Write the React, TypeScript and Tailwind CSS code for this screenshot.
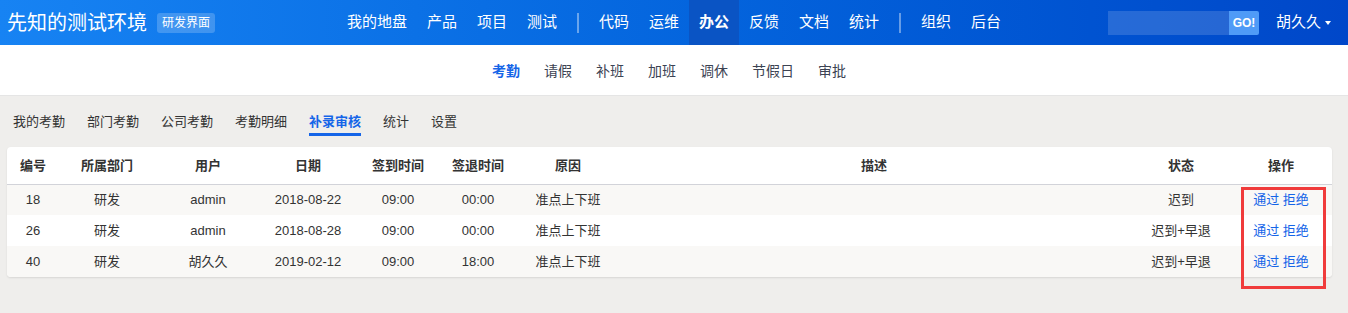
import React from 'react';

const font = "font-['Liberation_Sans','Noto_Sans_CJK_SC',sans-serif]";

const navGroups = [
  ['我的地盘', '产品', '项目', '测试'],
  ['代码', '运维', '办公', '反馈', '文档', '统计'],
  ['组织', '后台'],
];

const subNav = ['考勤', '请假', '补班', '加班', '调休', '节假日', '审批'];
const tabs = ['我的考勤', '部门考勤', '公司考勤', '考勤明细', '补录审核', '统计', '设置'];

const cols = [
  { label: '编号', w: 'w-[52px]' },
  { label: '所属部门', w: 'w-[96px]' },
  { label: '用户', w: 'w-[106px]' },
  { label: '日期', w: 'w-[94px]' },
  { label: '签到时间', w: 'w-[86px]' },
  { label: '签退时间', w: 'w-[74px]' },
  { label: '原因', w: 'w-[106px]' },
  { label: '描述', w: 'w-[506px]' },
  { label: '状态', w: 'w-[108px]' },
  { label: '操作', w: 'w-[97px]' },
];

const rows = [
  { id: '18', dept: '研发', user: 'admin', date: '2018-08-22', signIn: '09:00', signOut: '00:00', reason: '准点上下班', desc: '', status: '迟到' },
  { id: '26', dept: '研发', user: 'admin', date: '2018-08-28', signIn: '09:00', signOut: '00:00', reason: '准点上下班', desc: '', status: '迟到+早退' },
  { id: '40', dept: '研发', user: '胡久久', date: '2019-02-12', signIn: '09:00', signOut: '18:00', reason: '准点上下班', desc: '', status: '迟到+早退' },
];

function Header() {
  return (
    <div className="h-[45px] grid grid-cols-[1fr_auto_1fr] bg-gradient-to-r from-[#1783f3] to-[#0047c9] text-white">
      <div className="flex items-center pl-[7px]">
        <span className="text-[20px] leading-none">先知的测试环境</span>
        <span className="ml-[10px] h-[20px] px-[5px] flex items-center rounded-[3px] bg-white/20 text-[12px]">研发界面</span>
      </div>
      <nav className="flex items-stretch text-[15px]">
        {navGroups.map((g, gi) => (
          <React.Fragment key={gi}>
            {gi > 0 && <div className="self-center w-[2px] h-[20px] mx-[10px] bg-white/40" />}
            {g.map((item) => (
              <a
                key={item}
                className={
                  item === '办公'
                    ? 'px-[10px] flex items-center bg-[#0a54c4] font-bold'
                    : 'px-[10px] flex items-center'
                }
              >
                {item}
              </a>
            ))}
          </React.Fragment>
        ))}
      </nav>
      <div className="flex items-center justify-end">
        <div className="flex h-[24px]">
          <div className="w-[121px] bg-white/15" />
          <button className="w-[30px] bg-[#4f9bf7] rounded-r-[2px] text-[12px] font-semibold">GO!</button>
        </div>
        <div className="flex items-center pl-[17px] pr-[17px] text-[15px]">
          胡久久
          <span className="ml-[4px] w-0 h-0 border-l-[3px] border-r-[3px] border-t-[4px] border-l-transparent border-r-transparent border-t-white" />
        </div>
      </div>
    </div>
  );
}

function SubNav() {
  return (
    <div className="h-[51px] bg-white border-b border-[#e5e5e5] flex justify-center items-center pt-[3px] pr-[10px] text-[14px] text-[#3c4353]">
      {subNav.map((s) => (
        <a key={s} className={s === '考勤' ? 'px-[12px] text-[#1565e8] font-bold' : 'px-[12px]'}>
          {s}
        </a>
      ))}
    </div>
  );
}

function Tabs() {
  return (
    <div className="flex pl-[2px] pt-[15px] mb-[11px] text-[13px] text-[#333]">
      {tabs.map((t) => (
        <a key={t} className="px-[11px] flex flex-col">
          <span className={t === '补录审核' ? 'leading-[22px] text-[#1565e8] font-bold' : 'leading-[22px]'}>{t}</span>
          <span className={t === '补录审核' ? 'h-[3px] bg-[#1565e8]' : 'h-[3px]'} />
        </a>
      ))}
    </div>
  );
}

function Table() {
  return (
    <div className="relative ml-[7px] w-[1325px] bg-white rounded-[4px] shadow-[0_1px_2px_rgba(0,0,0,0.1)]">
      <div className="rounded-[4px] overflow-hidden">
        <table className="table-fixed w-full border-collapse text-[13px] text-[#333]">
          <colgroup>
            {cols.map((c) => (
              <col key={c.label} className={c.w} />
            ))}
          </colgroup>
          <thead>
            <tr className="h-[37px] border-b border-[#d2d3d9]">
              {cols.map((c, i) => (
                <th key={c.label} className={i === 9 ? 'font-bold text-center pr-[5px]' : 'font-bold text-center'}>
                  {c.label}
                </th>
              ))}
            </tr>
          </thead>
          <tbody>
            {rows.map((r, i) => (
              <tr key={r.id} className={i % 2 === 0 ? 'h-[31px] bg-[#f9f8f6]' : 'h-[31px] bg-white'}>
                <td className="text-center">{r.id}</td>
                <td className="text-center">{r.dept}</td>
                <td className="text-center">{r.user}</td>
                <td className="text-center">{r.date}</td>
                <td className="text-center">{r.signIn}</td>
                <td className="text-center">{r.signOut}</td>
                <td className="text-center">{r.reason}</td>
                <td className="text-center">{r.desc}</td>
                <td className="text-center">{r.status}</td>
                <td className="text-center pr-[5px] text-[#1565e8]">
                  <a>通过</a> <a>拒绝</a>
                </td>
              </tr>
            ))}
          </tbody>
        </table>
      </div>
      {/* annotation box over the action column */}
      <div className="absolute left-[1234px] top-[40px] w-[85px] h-[102px] border-[3px] border-[#f03b3b] pointer-events-none" />
    </div>
  );
}

export default function App() {
  return (
    <div className={`${font} min-h-[313px] bg-[#efeeec]`}>
      <Header />
      <SubNav />
      <Tabs />
      <Table />
    </div>
  );
}
